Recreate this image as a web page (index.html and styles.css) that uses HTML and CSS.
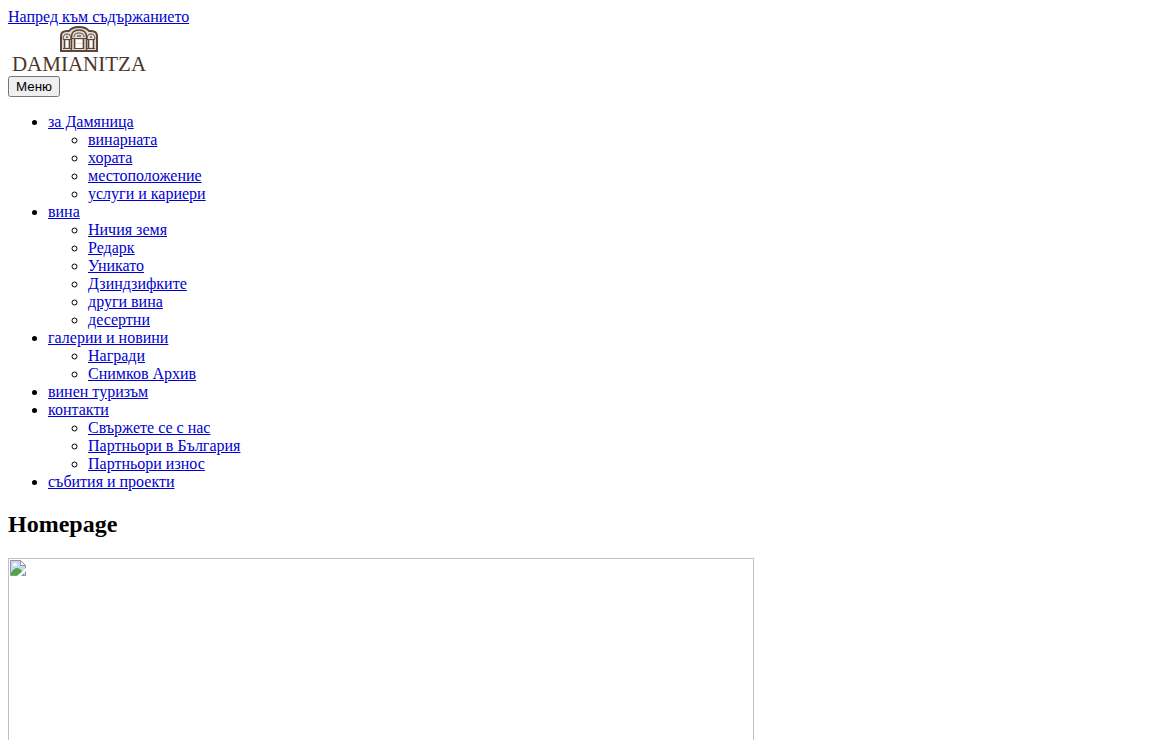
FILE: index.html
```html
<!DOCTYPE html>
<html lang="bg">

<head>
	<meta charset="utf-8">
	<title>Damianitza</title>
	<link rel="stylesheet" href="styles.css">
</head>

<body>
	<a href="#content">Напред към съдържанието</a>

	<header>
		<a class="logo" href="#" aria-label="Damianitza">
			<svg width="142" height="46" viewBox="0 0 142 46">
				<!-- the winery facade -->
				<g fill="none" stroke="#5b473a">
					<path d="M53 25V10q0-5 6-5h2q3-4 10-4t10 4h2q6 0 6 5v15z" fill="#e4ddd7" stroke-width="2" />
					<path d="M63.500 24V11q0-7 7.500-7t7.500 7v13" stroke-width="1.500" />
					<path d="M66 11q0-4 5-4t5 4" />
					<path d="M55 13q0-5 4-5t4 5M79 13q0-5 4-5t4 5" />
					<path d="M55 13.500h8M79 13.500h8M64 12.500h14M55 22.500h8M79 22.500h8M66 22.500h10" />
					<path d="M56.500 14v9M61.500 14v9M80.500 14v9M85.500 14v9M66.500 13v10M75.500 13v10" stroke-width="1.500" />
				</g>
				<path d="M68 14h6v3h-6zM68 18h6v4h-6zM58 15h2v6h-2zM82 15h2v6h-2z" fill="#fff" />
				<path d="M69 9h4v2h-4zM58 10h2v2h-2zM82 10h2v2h-2z" fill="#8d7d72" />
				<text class="logo-name" x="71" y="45" text-anchor="middle">DAMIANITZA</text>
			</svg>
		</a>
	</header>

	<nav>
		<button type="button">Меню</button>
		<ul>
			<li><a href="#">за Дамяница</a>
				<ul>
					<li><a href="#">винарната</a></li>
					<li><a href="#">хората</a></li>
					<li><a href="#">местоположение</a></li>
					<li><a href="#">услуги и кариери</a></li>
				</ul>
			</li>
			<li><a href="#">вина</a>
				<ul>
					<li><a href="#">Ничия земя</a></li>
					<li><a href="#">Редарк</a></li>
					<li><a href="#">Уникато</a></li>
					<li><a href="#">Дзиндзифките</a></li>
					<li><a href="#">други вина</a></li>
					<li><a href="#">десертни</a></li>
				</ul>
			</li>
			<li><a href="#">галерии и новини</a>
				<ul>
					<li><a href="#">Награди</a></li>
					<li><a href="#">Снимков Архив</a></li>
				</ul>
			</li>
			<li><a href="#">винен туризъм</a></li>
			<li><a href="#">контакти</a>
				<ul>
					<li><a href="#">Свържете се с нас</a></li>
					<li><a href="#">Партньори в България</a></li>
					<li><a href="#">Партньори износ</a></li>
				</ul>
			</li>
			<li><a href="#">събития и проекти</a></li>
		</ul>
	</nav>

	<main id="content">
		<h2>Homepage</h2>
		<div class="slide">
			<!-- missing picture -->
			<svg width="16" height="16" viewBox="0 0 16 16">
				<path d="M.5.500h10l5 5v10H.500z" fill="#c5d7f4" stroke="#8f949b" />
				<path d="M10.500.500v5h5z" fill="#fff" stroke="#8f949b" />
				<ellipse cx="5" cy="4.500" rx="2" ry="1.500" fill="#fff" />
				<path d="M1 13q3-5 6-5 3 0 5 3l2 4H1z" fill="#4da63f" />
				<path d="M16 8v3l-5 5H7z" fill="#fff" />
			</svg>
		</div>
	</main>
</body>

</html>
```

FILE: styles.css
```css
body {
	margin: 8px;
	background: white;
	color: black;
	font: 16px "Liberation Serif", serif;
	line-height: 18px;
}

a {
	color: #0000d0;
}

.logo svg {
	overflow: visible;
}

.logo-name {
	font-family: "Liberation Serif", serif;
	font-size: 21px;
	fill: #4b3528;
}

button {
	font-family: "Liberation Sans", sans-serif;
}

h2 {
	font-size: 24px;
	line-height: 27px;
	margin: 20px 0;
}

.slide {
	box-sizing: border-box;
	max-width: 746px;
	height: 320px;
	padding: 1px;
	border: 1px solid silver;
}
```
